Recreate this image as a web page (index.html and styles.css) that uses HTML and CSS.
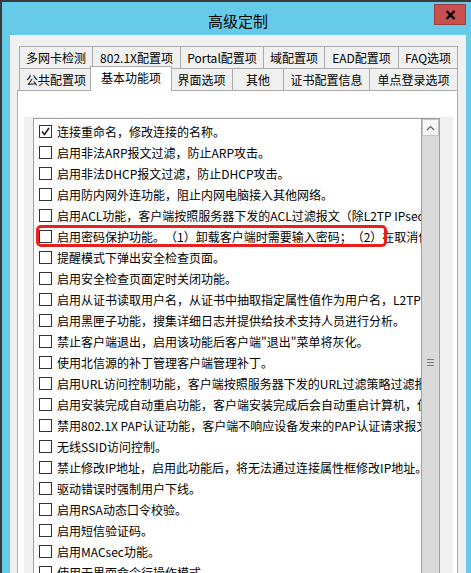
FILE: index.html
```html
<!DOCTYPE html>
<html lang="zh-CN">
<head>
    <meta charset="UTF-8">
    <title>高级定制</title>
    <link rel="stylesheet" href="styles.css">
</head>
<body>
    <div class="window">
        <div class="titlebar">
            <span class="title">高级定制</span>
            <div class="close">
                <svg width="11" height="10" viewBox="0 0 11 10"><path d="M1.5 1 L9.5 9 M9.5 1 L1.5 9" stroke="#000" stroke-width="2.4"/></svg>
            </div>
        </div>

        <div class="panel">
            <!-- 选项卡 -->
            <div class="tab-row">
                <div class="tab w73">多网卡检测</div>
                <div class="tab w88">802.1X配置项</div>
                <div class="tab w83">Portal配置项</div>
                <div class="tab w61">域配置项</div>
                <div class="tab w74">EAD配置项</div>
                <div class="tab w60">FAQ选项</div>
            </div>
            <div class="tab-row">
                <div class="tab w73">公共配置项</div>
                <div class="tab active">基本功能项</div>
                <div class="tab w62">界面选项</div>
                <div class="tab w51">其他</div>
                <div class="tab w86">证书配置信息</div>
                <div class="tab w89">单点登录选项</div>
            </div>

            <div class="tab-page">
                <div class="inner">
                    <div class="listbox">
                        <div class="items">
                            <div class="row"><span class="box checked"><svg width="11" height="11" viewBox="0 0 11 11"><path d="M2 5.5 L4.5 8.5 L9 2" fill="none" stroke="#222" stroke-width="1.6"/></svg></span>连接重命名，修改连接的名称。</div>
                            <div class="row"><span class="box"></span>启用非法ARP报文过滤，防止ARP攻击。</div>
                            <div class="row"><span class="box"></span>启用非法DHCP报文过滤，防止DHCP攻击。</div>
                            <div class="row"><span class="box"></span>启用防内网外连功能，阻止内网电脑接入其他网络。</div>
                            <div class="row"><span class="box"></span>启用ACL功能，客户端按照服务器下发的ACL过滤报文（除L2TP IPsec报文）。</div>
                            <div class="row"><span class="box"></span>启用密码保护功能。（1）卸载客户端时需要输入密码；（2）在取消保护时需要输入密码。<span class="mark"></span></div>
                            <div class="row"><span class="box"></span>提醒模式下弹出安全检查页面。</div>
                            <div class="row"><span class="box"></span>启用安全检查页面定时关闭功能。</div>
                            <div class="row"><span class="box"></span>启用从证书读取用户名，从证书中抽取指定属性值作为用户名，L2TP IPsec认证不支持。</div>
                            <div class="row"><span class="box"></span>启用黑匣子功能，搜集详细日志并提供给技术支持人员进行分析。</div>
                            <div class="row"><span class="box"></span>禁止客户端退出，启用该功能后客户端"退出"菜单将灰化。</div>
                            <div class="row"><span class="box"></span>使用北信源的补丁管理客户端管理补丁。</div>
                            <div class="row"><span class="box"></span>启用URL访问控制功能，客户端按照服务器下发的URL过滤策略过滤报文。</div>
                            <div class="row"><span class="box"></span>启用安装完成自动重启功能，客户端安装完成后会自动重启计算机，使配置生效。</div>
                            <div class="row"><span class="box"></span>禁用802.1X PAP认证功能，客户端不响应设备发来的PAP认证请求报文。</div>
                            <div class="row"><span class="box"></span>无线SSID访问控制。</div>
                            <div class="row"><span class="box"></span>禁止修改IP地址，启用此功能后，将无法通过连接属性框修改IP地址。</div>
                            <div class="row"><span class="box"></span>驱动错误时强制用户下线。</div>
                            <div class="row"><span class="box"></span>启用RSA动态口令校验。</div>
                            <div class="row"><span class="box"></span>启用短信验证码。</div>
                            <div class="row"><span class="box"></span>启用MACsec功能。</div>
                            <div class="row"><span class="box"></span>使用无界面命令行操作模式。</div>
                        </div>
                        <div class="scrollbar">
                            <div class="sb-up">
                                <svg width="9" height="6" viewBox="0 0 9 6"><path d="M1 5 L4.5 1.5 L8 5" fill="none" stroke="#606060" stroke-width="1.2"/></svg>
                            </div>
                            <div class="sb-thumb"><span class="grip"></span></div>
                        </div>
                    </div>
                </div>
            </div>
        </div>
    </div>
</body>
</html>
```

FILE: styles.css
```css
html, body {
    margin: 0;
    height: 100%;
    overflow: hidden;
}

body {
    font-family: "Noto Sans CJK SC", "Microsoft YaHei", sans-serif;
    font-size: 12px;
    color: #000;
    text-spacing-trim: space-all;
}

.window {
    height: 100%;
    box-sizing: border-box;
    background-color: #66cbe9;
    border-top: 2px solid #3a3a3a;
    border-left: 2px solid #3a3a3a;
    padding: 0 5px 0 8px;
    display: flex;
    flex-direction: column;
}

.titlebar {
    height: 33px;
    flex: none;
    box-sizing: border-box;
    padding-top: 3px;
    position: relative;
    display: flex;
    align-items: center;
    justify-content: center;
}

.title {
    font-size: 15px;
}

.close {
    position: absolute;
    top: 2px;
    right: 0;
    width: 32px;
    height: 21px;
    box-sizing: border-box;
    background-color: #c75050;
    border: 1px solid #9e3c3c;
    display: flex;
    align-items: center;
    justify-content: center;
}

.panel {
    flex: 1;
    min-height: 0;
    background-color: #f0f0f0;
    padding: 11px 8px 0 7px;
}

.tab-row {
    display: flex;
    height: 22px;
    margin-left: 2px;
}

.tab {
    box-sizing: border-box;
    height: 22px;
    border: 1px solid #adadad;
    border-right: none;
    border-bottom: none;
    background-color: #f0f0f0;
    display: flex;
    align-items: center;
    justify-content: center;
    white-space: nowrap;
}

.tab:last-child {
    border-right: 1px solid #adadad;
}

.tab.active {
    width: 82px;
    height: 25px;
    margin: -2px -2px 0;
    padding-bottom: 3px;
    background-color: #fff;
    border-right: 1px solid #adadad;
    position: relative;
    z-index: 1;
}

.w51 { width: 51px; }
.w60 { width: 60px; }
.w61 { width: 61px; }
.w62 { width: 62px; }
.w73 { width: 73px; }
.w74 { width: 74px; }
.w83 { width: 83px; }
.w86 { width: 86px; }
.w88 { width: 88px; }
.w89 { width: 89px; }

.tab-page {
    height: 600px;
    background-color: #fff;
    border: 1px solid #adadad;
    padding: 26px 4px 0 6px;
}

.inner {
    height: 100%;
    background-color: #f0f0f0;
    padding: 1px 13px 0 9px;
}

.listbox {
    height: 600px;
    display: flex;
    background-color: #fff;
    border: 1px solid #a0a0a0;
}

.items {
    flex: 1;
    min-width: 0;
    overflow: hidden;
    padding-top: 2px;
}

.row {
    position: relative;
    height: 21px;
    display: flex;
    align-items: center;
    padding-left: 5px;
    white-space: nowrap;
}

.box {
    flex: none;
    width: 13px;
    height: 13px;
    box-sizing: border-box;
    border: 1px solid #333;
    background-color: #fff;
    margin-right: 5px;
    display: flex;
    align-items: center;
    justify-content: center;
}

.mark {
    position: absolute;
    left: 2px;
    top: -1px;
    width: 351px;
    height: 22px;
    box-sizing: border-box;
    border: 3px solid #e8201e;
    border-radius: 5px;
}

.scrollbar {
    flex: none;
    width: 17px;
    border-left: 1px solid #a0a0a0;
    display: flex;
    flex-direction: column;
}

.sb-up {
    height: 17px;
    box-sizing: border-box;
    border: 1px solid #c4c4c4;
    background-color: #f7f7f7;
    display: flex;
    align-items: center;
    justify-content: center;
}

.sb-thumb {
    flex: 1;
    background-color: #dadada;
    padding-top: 223px;
    display: flex;
    justify-content: center;
}

.grip {
    width: 7px;
    height: 5px;
    border-top: 1px solid #7a7a7a;
    border-bottom: 1px solid #7a7a7a;
    position: relative;
}

.grip::after {
    content: "";
    position: absolute;
    left: 0;
    right: 0;
    top: 2px;
    border-top: 1px solid #7a7a7a;
}
```
